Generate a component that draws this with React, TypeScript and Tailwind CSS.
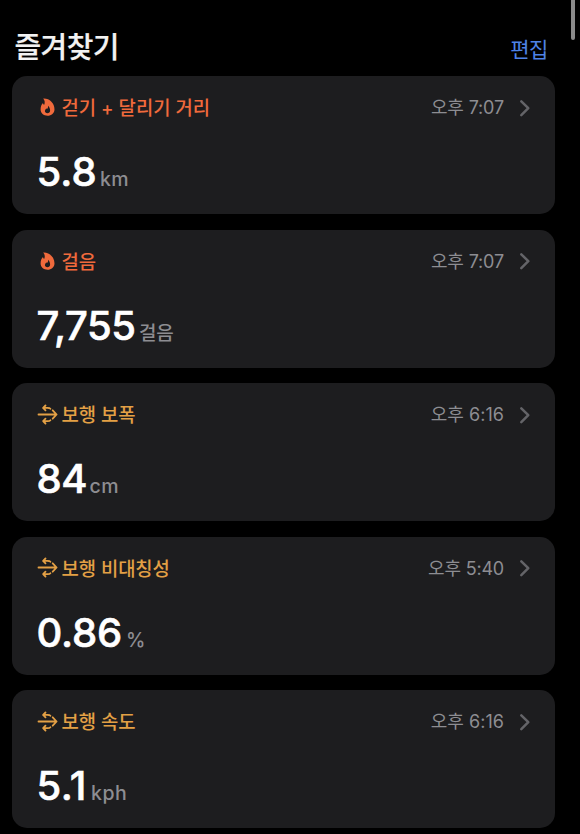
import React from "react";

type Kind = "activity" | "mobility";

interface Metric {
  kind: Kind;
  title: string;
  time: string;
  timeClass: string;
  value: string;
  unit: string;
  valueClass: string;
  unitClass: string;
}

const metrics: Metric[] = [
  { kind: "activity", title: "걷기 + 달리기 거리", time: "오후 7:07", timeClass: "tracking-[-0.15px]", value: "5.8", unit: "km", valueClass: "w-[63.500px] tracking-[0.1px]", unitClass: "text-[19.500px] tracking-[0.4px]" },
  { kind: "activity", title: "걸음", time: "오후 7:07", timeClass: "tracking-[-0.15px]", value: "7,755", unit: "걸음", valueClass: "w-[102.500px] tracking-[-0.4px]", unitClass: "text-[19px] tracking-[-0.2px]" },
  { kind: "mobility", title: "보행 보폭", time: "오후 6:16", timeClass: "tracking-[0.05px]", value: "84", unit: "cm", valueClass: "w-[53px] tracking-[-0.4px]", unitClass: "text-[19.500px] tracking-[0.5px]" },
  { kind: "mobility", title: "보행 비대칭성", time: "오후 5:40", timeClass: "tracking-[-0.2px]", value: "0.86", unit: "%", valueClass: "w-[89.500px] tracking-[-0.2px]", unitClass: "text-[19.500px]" },
  { kind: "mobility", title: "보행 속도", time: "오후 6:16", timeClass: "tracking-[0.05px]", value: "5.1", unit: "kph", valueClass: "w-[54.500px] tracking-[0.5px]", unitClass: "text-[19.500px] tracking-[0.5px]" },
];

function FlameIcon() {
  return (
    <svg className="ml-[3px] mr-[6.500px] h-[18px] w-[15px] shrink-0" viewBox="0 0 15 18">
      <path
        fillRule="evenodd"
        fill="#f06a3c"
        d="M3.200.6C9.400.2 14.500 5.300 14.500 11.200c0 4-3.100 6.500-7 6.500S.6 15.200.6 11.500C.6 8.800 1.400 6.600 3 5c.2 1 .5 1.500 1.100 1.900C5.300 5 4.800 2.400 3.200.6ZM8.100 7.700c.1 1.700-.3 2.500-1.100 3.300-.4-.2-.5-.5-.6-.8-1 1-1.500 1.900-1.500 2.800 0 1.300 1.100 2.200 2.500 2.200 1.500 0 2.700-1 2.700-2.700 0-1.900-.7-3.500-2-4.800Z"
      />
    </svg>
  );
}

function MobilityIcon() {
  return (
    <svg
      className="mr-[4px] h-[21px] w-[21px] shrink-0"
      viewBox="0 0 21 21"
      fill="none"
      stroke="#e3a045"
      strokeWidth="1.800"
      strokeLinecap="round"
      strokeLinejoin="round"
    >
      <path d="M1.500 10.500H19.300M15.700 6.300 19.600 10.500 15.700 14.700" />
      <path d="M8.500 1.500 6.100 3.900 8.500 6.300M6.100 3.900H10.500Q12.700 3.900 13.400 4.800" />
      <path d="M8.500 14.700 6.100 17.100 8.500 19.500M6.100 17.100H10.500Q12.700 17.100 13.400 16.200" />
    </svg>
  );
}

function MetricCard({ metric }: { metric: Metric }) {
  const activity = metric.kind === "activity";
  return (
    <section className="h-[138px] shrink-0 rounded-[15px] bg-[#1d1d1f] pl-[25px] pr-[24px] pt-[19px]">
      <div className="flex h-[24px] items-center">
        {activity ? <FlameIcon /> : <MobilityIcon />}
        <h2
          className={
            activity
              ? "flex-1 whitespace-nowrap pt-[4px] text-[18.800px] font-medium leading-[24px] text-[#f06a3c]"
              : "-ml-[0.500px] flex-1 whitespace-nowrap pt-[4px] text-[18.800px] font-medium leading-[24px] tracking-[-0.05px] text-[#e3a045]"
          }
        >
          {metric.title}
        </h2>
        <span className={`${metric.timeClass} whitespace-nowrap pt-[2px] text-[18px] leading-[24px] text-[#8d8d92]`}>
          {metric.time}
        </span>
        <svg className="ml-[15px] mt-px h-[18px] w-[12px] shrink-0" viewBox="0 0 12 18" fill="none" stroke="#646468" strokeWidth="2.500" strokeLinecap="round" strokeLinejoin="round">
          <path d="M2.300 2.300 9.300 9.200 2.300 16.100" />
        </svg>
      </div>
      <div className="-ml-[0.500px] mt-[29px] flex items-baseline whitespace-nowrap leading-[48px]">
        <strong className={`${metric.valueClass} shrink-0 text-[40px] font-medium text-white [-webkit-text-stroke:0.600px_white]`}>{metric.value}</strong>
        <span className={`${metric.unitClass} font-medium text-[#8d8d92]`}>{metric.unit}</span>
      </div>
    </section>
  );
}

export default function App() {
  return (
    <main className="relative h-[834px] w-[580px] overflow-hidden bg-black font-['Inter','Noto_Sans_CJK_KR',sans-serif]">
      <header className="flex h-[76px] items-end justify-between pb-[13px] pl-[14.500px] pr-[32px] font-['Noto_Sans_CJK_KR',sans-serif]">
        <h1 className="text-[29px] font-medium leading-[36px] tracking-[-0.6px] text-[#f2f2f2] [-webkit-text-stroke:0.200px_#f2f2f2]">즐겨찾기</h1>
        <button className="text-[21px] leading-[30px] tracking-[-0.4px] text-[#4f83e6]">편집</button>
      </header>
      <div className="flex w-[555px] flex-col gap-[15.500px] pl-[12px]">
        {metrics.map((metric) => (
          <MetricCard key={metric.title} metric={metric} />
        ))}
      </div>
      <div className="absolute right-[5px] top-0 h-[40px] w-[4px] rounded-b-full bg-[#8a8a8a]" />
    </main>
  );
}
